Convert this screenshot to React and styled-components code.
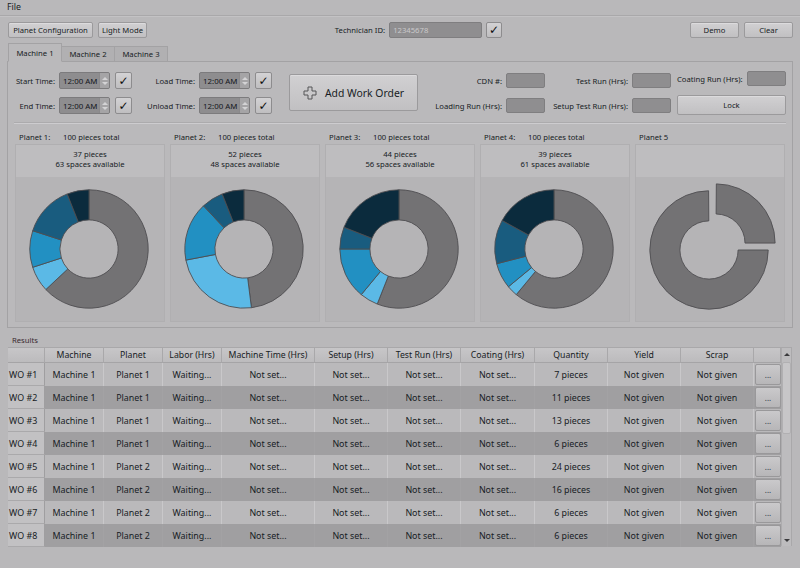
import React from 'react';
import styled, { createGlobalStyle } from 'styled-components';

const GlobalStyle = createGlobalStyle`
  html, body {
    margin: 0;
    padding: 0;
    background: #b9b8ba;
  }
  body {
    font-family: "Noto Sans", "Open Sans", sans-serif;
    color: #171c24;
  }
  * { box-sizing: border-box; }
`;

const Window = styled.div`
  width: 800px;
  height: 568px;
  overflow: hidden;
  background: #b9b8ba;
  display: flex;
  flex-direction: column;
`;

const MenuBar = styled.div`
  height: 16px;
  padding-left: 7px;
  font-size: 8.8px;
  line-height: 15px;
  border-bottom: 1px solid #a9a8aa;
  box-shadow: 0 1px 0 #c3c2c4;
`;

const TopBar = styled.div`
  display: flex;
  align-items: center;
  margin-top: 6px;
  padding: 0 7px 0 8px;
  height: 16px;
`;

const Group = styled.div`
  display: flex;
  align-items: center;
  gap: ${p => p.$gap || 5}px;
  margin-left: ${p => (p.$auto ? 'auto' : '0')};
`;

const Button = styled.button`
  width: ${p => p.$w}px;
  height: ${p => p.$h || 16}px;
  padding: 0;
  font-family: inherit;
  font-size: ${p => p.$fs || 7.7}px;
  color: #171c24;
  background: linear-gradient(#d1d0d2, #c1c0c2);
  border: 1px solid #9b9a9c;
  border-radius: 2px;
  box-shadow: inset 0 1px 0 #dcdbdd;
  display: flex;
  align-items: center;
  justify-content: center;
  gap: 8px;
`;

const CheckButton = styled.button`
  width: ${p => p.$s || 17}px;
  height: ${p => p.$s || 17}px;
  padding: 0;
  margin-left: ${p => p.$ml || 0}px;
  background: linear-gradient(#d3d2d4, #bfbec0);
  border: 1px solid #8d8c8e;
  border-radius: 2px;
  font-family: "DejaVu Sans", sans-serif;
  font-size: 12px;
  line-height: 1;
  color: #0d0d0d;
  display: flex;
  align-items: center;
  justify-content: center;
`;

const Label = styled.span`
  font-size: 7.7px;
  white-space: nowrap;
  width: ${p => (p.$w ? `${p.$w}px` : 'auto')};
  text-align: ${p => p.$align || 'left'};
  flex-shrink: 0;
`;

const TextBox = styled.div`
  width: ${p => p.$w}px;
  height: ${p => p.$h || 15}px;
  background: #8f8e90;
  border: 1px solid #7f7e80;
  border-radius: 2px;
  font-size: 7.7px;
  color: #cac9cb;
  display: flex;
  align-items: center;
  padding-left: 3px;
`;

const Tabs = styled.div`
  display: flex;
  align-items: flex-end;
  margin-top: 5px;
  padding-left: 8px;
  height: 18px;
`;

const Tab = styled.div`
  width: 54px;
  height: ${p => (p.$active ? 19 : 16)}px;
  font-size: 7.7px;
  display: flex;
  align-items: center;
  justify-content: center;
  background: ${p => (p.$active ? '#bab9bb' : '#b1b0b2')};
  border: 1px solid #a3a2a4;
  border-bottom: ${p => (p.$active ? '1px solid #bab9bb' : '1px solid #a3a2a4')};
  margin-right: -1px;
  position: relative;
  z-index: ${p => (p.$active ? 2 : 1)};
  margin-bottom: -1px;
`;

const TabPanel = styled.div`
  margin: 0 7px;
  height: 267px;
  border: 1px solid #a3a2a4;
  background: #bab9bb;
  padding: 10px 6px 0 6px;
  display: flex;
  flex-direction: column;
`;

const FormRow = styled.div`
  display: flex;
  align-items: flex-start;
  height: 43px;
`;

const FieldCol = styled.div`
  display: flex;
  flex-direction: column;
  gap: ${p => p.$gap}px;
  margin-left: ${p => p.$ml || 0}px;
  margin-top: ${p => p.$mt || 0}px;
`;

const Field = styled.div`
  display: flex;
  align-items: center;
  gap: 4px;
`;

const Spin = styled.div`
  width: 51px;
  height: 17px;
  display: flex;
  background: #8e8d8f;
  border: 1px solid #7c7b7d;
  border-radius: 2px;
  overflow: hidden;
`;

const SpinText = styled.div`
  flex: 1;
  font-size: 7.9px;
  color: #14171c;
  display: flex;
  align-items: center;
  padding-left: 3px;
`;

const SpinArrows = styled.div`
  width: 10px;
  background: #a5a4a6;
  border-left: 1px solid #8a898b;
  display: flex;
  flex-direction: column;
  align-items: center;
  justify-content: center;
  gap: 2px;
`;

const Arrow = styled.div`
  width: 0;
  height: 0;
  border-left: 3px solid transparent;
  border-right: 3px solid transparent;
  ${p => (p.$down ? 'border-top: 3px solid #d4d3d5;' : 'border-bottom: 3px solid #d4d3d5;')}
`;

const Separator = styled.div`
  margin-top: 7px;
  height: 2px;
  border-top: 1px solid #acabad;
  border-bottom: 1px solid #cdcccf;
`;

const PlanetRow = styled.div`
  display: flex;
  gap: 5px;
  margin-top: 5px;
  padding-left: 1px;
`;

const PlanetCol = styled.div`
  width: 150px;
  display: flex;
  flex-direction: column;
`;

const PlanetTitle = styled.div`
  height: 15px;
  display: flex;
  align-items: center;
  padding-left: 4px;
  font-size: 7.7px;
`;

const PlanetName = styled.span`
  width: 44px;
`;

const PlanetCard = styled.div`
  height: 178px;
  border: 1px solid #b0afb1;
  display: flex;
  flex-direction: column;
`;

const CardHead = styled.div`
  height: 34px;
  background: #bebdbf;
  display: flex;
  flex-direction: column;
  align-items: center;
  justify-content: center;
  font-size: 7.7px;
  line-height: 10px;
  padding-bottom: 4px;
`;

const ChartArea = styled.div`
  flex: 1;
  background: #b5b4b6;
  display: flex;
  align-items: center;
  justify-content: center;
`;

const ResultsLabel = styled.div`
  margin-top: 4px;
  padding-left: 12px;
  height: 15px;
  font-size: 7.7px;
  color: #3a2a30;
  display: flex;
  align-items: center;
`;

const TableWrap = styled.div`
  margin: 0 8px;
  height: 199px;
  display: flex;
  border: 1px solid #a9a8aa;
  border-bottom: none;
  border-left: none;
`;

const Grid = styled.div`
  display: grid;
  grid-template-columns: 37px 59px 59px 59px 93px 73px 73px 74px 73px 73px 73px 27px;
  grid-template-rows: 15px repeat(8, 23px);
  width: 773px;
`;

const HeadCell = styled.div`
  background: linear-gradient(#c7c6c8, #bcbbbd);
  border-right: 1px solid #a9a8aa;
  border-bottom: 1px solid #a5a4a6;
  font-size: 8.7px;
  display: flex;
  align-items: center;
  justify-content: center;
  white-space: nowrap;
`;

const RowHead = styled.div`
  background: #c2c1c3;
  border-right: 1px solid #9f9ea0;
  border-bottom: 1px solid #aaa9ab;
  font-size: 8.9px;
  display: flex;
  align-items: center;
  padding-left: 1px;
`;

const Cell = styled.div`
  background: ${p => (p.$dark ? '#a09fa1' : '#bab9bb')};
  border-right: 1px solid ${p => (p.$dark ? '#a3a2a4' : '#c9c8ca')};
  font-size: 8.9px;
  display: flex;
  align-items: center;
  justify-content: center;
  white-space: nowrap;
`;

const MoreCell = styled.div`
  background: ${p => (p.$dark ? '#a09fa1' : '#bab9bb')};
  padding: 1px 0 1px 1px;
`;

const MoreButton = styled.div`
  height: 100%;
  background: linear-gradient(#cac9cb, #b7b6b8);
  border: 1px solid #99989a;
  border-radius: 2px;
  font-size: 8px;
  color: #2b3442;
  display: flex;
  align-items: center;
  justify-content: center;
`;

const ScrollBar = styled.div`
  width: 11px;
  background: #bdbcbe;
  border-left: 1px solid #adacae;
  display: flex;
  flex-direction: column;
  align-items: center;
`;

const ScrollBtn = styled.div`
  height: 12px;
  width: 100%;
  display: flex;
  align-items: center;
  justify-content: center;
`;

const ScrollArrow = styled.div`
  width: 0;
  height: 0;
  border-left: 3px solid transparent;
  border-right: 3px solid transparent;
  ${p => (p.$down ? 'border-top: 3px solid #3a3a3c;' : 'border-bottom: 3px solid #3a3a3c;')}
`;

const Thumb = styled.div`
  width: 9px;
  height: 72px;
  margin-top: 2px;
  background: #c7c6c8;
  border: 1px solid #b1b0b2;
  border-radius: 2px;
`;

const ScrollTrack = styled.div`
  flex: 1;
`;

const COLORS = ['#737274', '#5bb9e6', '#2290c2', '#195c7f', '#0b2b3d'];

const pt = (cx, cy, r, deg) => {
  const a = ((deg - 90) * Math.PI) / 180;
  return [cx + r * Math.cos(a), cy + r * Math.sin(a)];
};

const arc = (cx, cy, r0, r1, a0, a1) => {
  const large = a1 - a0 > 180 ? 1 : 0;
  const [x0, y0] = pt(cx, cy, r1, a0);
  const [x1, y1] = pt(cx, cy, r1, a1);
  const [x2, y2] = pt(cx, cy, r0, a1);
  const [x3, y3] = pt(cx, cy, r0, a0);
  return `M${x0} ${y0} A${r1} ${r1} 0 ${large} 1 ${x1} ${y1} L${x2} ${y2} A${r0} ${r0} 0 ${large} 0 ${x3} ${y3}Z`;
};

const Donut = ({ parts }) => {
  let start = 0;
  return (
    <svg width="150" height="144" viewBox="0 0 150 144">
      {parts.map((p, i) => {
        const a0 = start;
        const a1 = start + p * 3.6;
        start = a1;
        return (
          <path key={i} d={arc(74, 72, 29.5, 60, a0, a1)} fill={COLORS[i]} stroke="#4e4d50" strokeWidth="0.9" />
        );
      })}
    </svg>
  );
};

const EmptyDonut = () => (
  <svg width="150" height="144" viewBox="0 0 150 144">
    <path d={arc(74, 73, 29.5, 60, 90, 359.6)} fill="#737274" stroke="#4e4d50" strokeWidth="0.9" />
    <path d={arc(81, 66, 29.5, 60, 0.4, 90)} fill="#737274" stroke="#4e4d50" strokeWidth="0.9" />
  </svg>
);

const planets = [
  { name: 'Planet 1:', total: '100 pieces total', pieces: 37, parts: [63, 7, 10, 14, 6] },
  { name: 'Planet 2:', total: '100 pieces total', pieces: 52, parts: [48, 24, 16, 6, 6] },
  { name: 'Planet 3:', total: '100 pieces total', pieces: 44, parts: [56, 5, 14, 6, 19] },
  { name: 'Planet 4:', total: '100 pieces total', pieces: 39, parts: [61, 3, 7, 12, 17] },
  { name: 'Planet 5', total: '', pieces: null, parts: null },
];

const headers = ['', 'Machine', 'Planet', 'Labor (Hrs)', 'Machine Time (Hrs)', 'Setup (Hrs)', 'Test Run (Hrs)', 'Coating (Hrs)', 'Quantity', 'Yield', 'Scrap', ''];

const orders = [
  { planet: 'Planet 1', qty: '7 pieces' },
  { planet: 'Planet 1', qty: '11 pieces' },
  { planet: 'Planet 1', qty: '13 pieces' },
  { planet: 'Planet 1', qty: '6 pieces' },
  { planet: 'Planet 2', qty: '24 pieces' },
  { planet: 'Planet 2', qty: '16 pieces' },
  { planet: 'Planet 2', qty: '6 pieces' },
  { planet: 'Planet 2', qty: '6 pieces' },
];

const SpinBox = () => (
  <Spin>
    <SpinText>12:00 AM</SpinText>
    <SpinArrows>
      <Arrow />
      <Arrow $down />
    </SpinArrows>
  </Spin>
);

const TimeField = ({ label, w }) => (
  <Field>
    <Label $w={w} $align="right">{label}</Label>
    <SpinBox />
    <CheckButton $ml={1}>✓</CheckButton>
  </Field>
);

const RunField = ({ label, w }) => (
  <Field>
    <Label $w={w} $align="right">{label}</Label>
    <TextBox $w={39} />
  </Field>
);

const PlusIcon = () => (
  <svg width="14" height="14" viewBox="0 0 14 14">
    <path d="M5 1h4v4h4v4H9v4H5V9H1V5h4z" fill="#c9c8ca" stroke="#555457" strokeWidth="1" />
  </svg>
);

export default function App() {
  return (
    <>
      <GlobalStyle />
      <Window>
        <MenuBar>File</MenuBar>
        <TopBar>
          <Group $gap={5}>
            <Button $w={85}>Planet Configuration</Button>
            <Button $w={49}>Light Mode</Button>
          </Group>
          <Group $auto $gap={4}>
            <Label>Technician ID:</Label>
            <TextBox $w={93} $h={16}>12345678</TextBox>
            <CheckButton $s={16}>✓</CheckButton>
          </Group>
          <Group $auto $gap={5}>
            <Button $w={49}>Demo</Button>
            <Button $w={49}>Clear</Button>
          </Group>
        </TopBar>

        <Tabs>
          <Tab $active>Machine 1</Tab>
          <Tab>Machine 2</Tab>
          <Tab>Machine 3</Tab>
        </Tabs>
        <TabPanel>
          <FormRow>
            <FieldCol $gap={8}>
              <TimeField label="Start Time:" w={41} />
              <TimeField label="End Time:" w={41} />
            </FieldCol>
            <FieldCol $gap={8} $ml={14}>
              <TimeField label="Load Time:" w={49} />
              <TimeField label="Unload Time:" w={49} />
            </FieldCol>
            <FieldCol $ml={17} $mt={2}>
              <Button $w={129} $h={37} $fs={10.4}>
                <PlusIcon />
                Add Work Order
              </Button>
            </FieldCol>
            <FieldCol $gap={10} $ml={17} $mt={1}>
              <RunField label="CDN #:" w={67} />
              <RunField label="Loading Run (Hrs):" w={67} />
            </FieldCol>
            <FieldCol $gap={10} $ml={5} $mt={1}>
              <RunField label="Test Run (Hrs):" w={78} />
              <RunField label="Setup Test Run (Hrs):" w={78} />
            </FieldCol>
            <FieldCol $gap={9} $ml={6} $mt={-1}>
              <Field>
                <Label $w={66}>Coating Run (Hrs):</Label>
                <TextBox $w={39} />
              </Field>
              <Button $w={109} $h={20}>Lock</Button>
            </FieldCol>
          </FormRow>
          <Separator />
          <PlanetRow>
            {planets.map(p => (
              <PlanetCol key={p.name}>
                <PlanetTitle>
                  <PlanetName>{p.name}</PlanetName>
                  {p.total}
                </PlanetTitle>
                <PlanetCard>
                  <CardHead>
                    {p.pieces !== null && (
                      <>
                        <span>{p.pieces} pieces</span>
                        <span>{100 - p.pieces} spaces available</span>
                      </>
                    )}
                  </CardHead>
                  <ChartArea>{p.parts ? <Donut parts={p.parts} /> : <EmptyDonut />}</ChartArea>
                </PlanetCard>
              </PlanetCol>
            ))}
          </PlanetRow>
        </TabPanel>

        <ResultsLabel>Results</ResultsLabel>
        <TableWrap>
          <Grid>
            {headers.map((h, i) => (
              <HeadCell key={i}>{h}</HeadCell>
            ))}
            {orders.map((o, i) => {
              const dark = i % 2 === 1;
              return (
                <React.Fragment key={i}>
                  <RowHead>WO #{i + 1}</RowHead>
                  <Cell $dark={dark}>Machine 1</Cell>
                  <Cell $dark={dark}>{o.planet}</Cell>
                  <Cell $dark={dark}>Waiting...</Cell>
                  <Cell $dark={dark}>Not set...</Cell>
                  <Cell $dark={dark}>Not set...</Cell>
                  <Cell $dark={dark}>Not set...</Cell>
                  <Cell $dark={dark}>Not set...</Cell>
                  <Cell $dark={dark}>{o.qty}</Cell>
                  <Cell $dark={dark}>Not given</Cell>
                  <Cell $dark={dark}>Not given</Cell>
                  <MoreCell $dark={dark}>
                    <MoreButton>...</MoreButton>
                  </MoreCell>
                </React.Fragment>
              );
            })}
          </Grid>
          <ScrollBar>
            <ScrollBtn><ScrollArrow /></ScrollBtn>
            <Thumb />
            <ScrollTrack />
            <ScrollBtn><ScrollArrow $down /></ScrollBtn>
          </ScrollBar>
        </TableWrap>
      </Window>
    </>
  );
}
